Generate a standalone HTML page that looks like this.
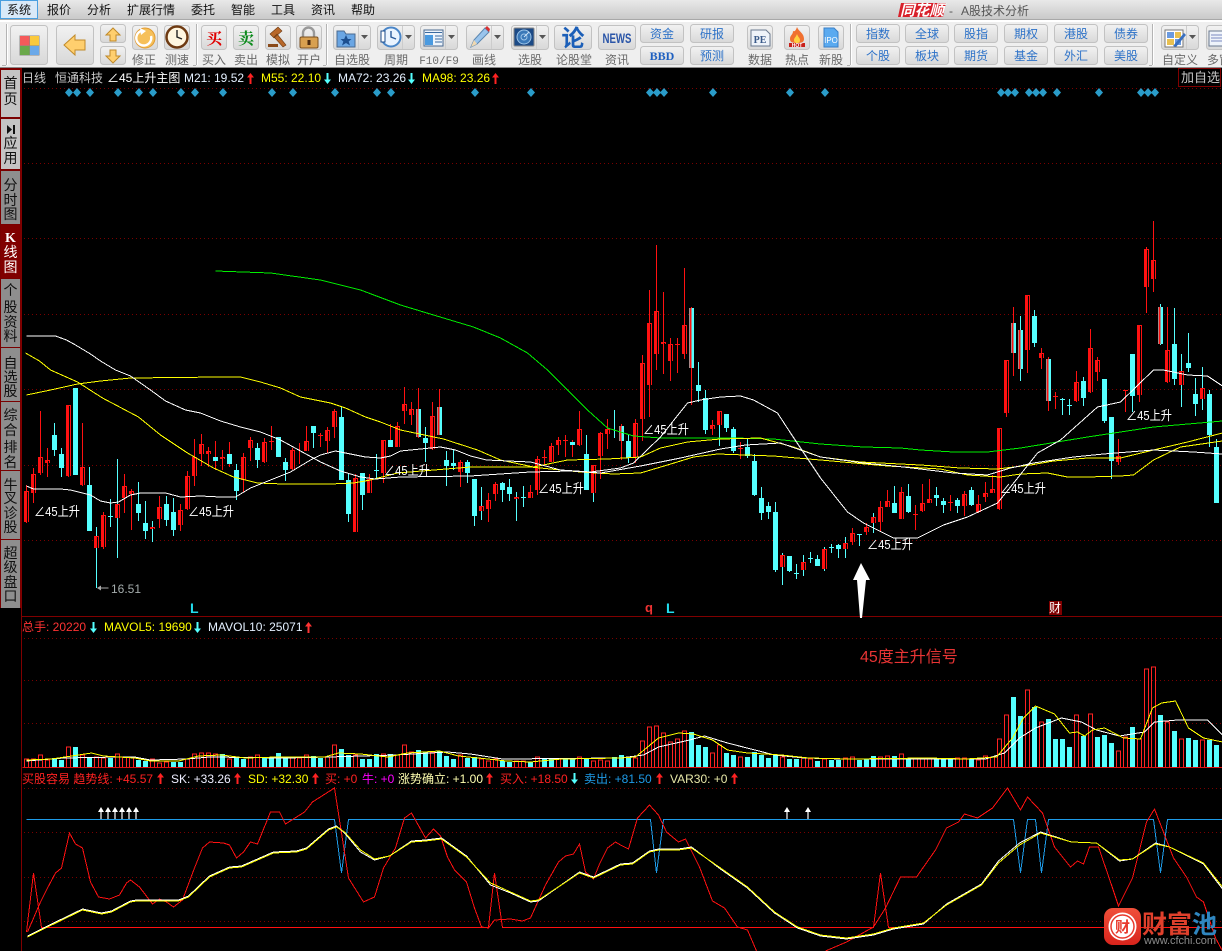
<!DOCTYPE html>
<html lang="zh-CN"><head><meta charset="utf-8"><title>同花顺 A股技术分析</title>
<style>
html,body{margin:0;padding:0;background:#000;width:1222px;height:951px;overflow:hidden}
svg{display:block;position:absolute;left:0;top:0}
text{font-family:"Liberation Sans","WenQuanYi Zen Hei","Noto Sans CJK SC",sans-serif;font-size:12px}
.l{fill:#6a6a6a;text-anchor:middle}
.g{fill:#2d72c8;text-anchor:middle}
.m{fill:#111}
.b{fill:url(#bg);stroke:#c2c2c2}
.s{font-size:14px;text-anchor:middle;fill:#111}
.a{font-size:13px}
path,polyline{shape-rendering:auto}
.c path,.c polyline{shape-rendering:crispEdges;fill:none}
</style></head><body>
<svg width="1222" height="951" viewBox="0 0 1222 951" xmlns="http://www.w3.org/2000/svg">
<defs>
<linearGradient id="mb" x1="0" y1="0" x2="0" y2="1"><stop offset="0" stop-color="#e9e9e9"/><stop offset="1" stop-color="#c9c9c9"/></linearGradient>
<linearGradient id="bg" x1="0" y1="0" x2="0" y2="1"><stop offset="0" stop-color="#f2f2f2"/><stop offset="1" stop-color="#d8d8d8"/></linearGradient>
<linearGradient id="wm" x1="0" y1="0" x2="0" y2="1"><stop offset="0" stop-color="#f0503a"/><stop offset="1" stop-color="#d8241c"/></linearGradient>
<path id="ua" d="M3.5 0L7 4.5H4.5V11H2.5V4.5H0z"/>
<path id="da" d="M3.5 11L7 6.5H4.5V0H2.5V6.5H0z"/>
<path id="sa" d="M3 0L6 5H3.6V12H2.4V5H0z"/>
</defs>
<rect width="1222" height="951" fill="#000"/>

<!-- menu -->
<rect width="1222" height="19" fill="url(#mb)"/>
<rect y="19" width="1222" height="1" fill="#a8a8a8"/><rect y="20" width="1222" height="2" fill="#fff"/>
<rect y="22" width="1222" height="45" fill="#efefef"/><rect y="67" width="1222" height="1" fill="#8a8a8a"/>
<rect x=".5" y=".5" width="37" height="18" fill="#d9e9f8" stroke="#4a9fe0"/>
<g class="m">
<text x="7" y="14">系统</text><text x="47" y="14">报价</text><text x="87" y="14">分析</text><text x="127" y="14">扩展行情</text><text x="191" y="14">委托</text><text x="231" y="14">智能</text><text x="271" y="14">工具</text><text x="311" y="14">资讯</text><text x="351" y="14">帮助</text>
</g>
<path d="M901 3H946L943 17H898z" fill="#d8202a"/>
<text x="900" y="15.500" textLength="44" lengthAdjust="spacingAndGlyphs" style="font-size:15px;font-weight:bold;font-style:italic" fill="#fff">同花顺</text>
<text x="949" y="15" fill="#555">-</text><text x="961" y="15" fill="#555">A股技术分析</text>

<!-- separators -->
<g fill="none">
<path d="M6.5 24V65M2 65.5H6M196.5 24V65M193 65.5H196M326.5 24V65M323 65.5H326M850.5 24V65M847 65.5H850M1152.5 24V65M1149 65.5H1152" stroke="#b4b4b4"/>
<path d="M7.5 24V65M197.5 24V65M327.5 24V65M851.5 24V65M1153.5 24V65" stroke="#fff"/>
</g>

<!-- buttons -->
<rect class="b" x="10.5" y="25.5" width="37" height="39" rx="3"/>
<rect x="19.5" y="35.5" width="20" height="20" fill="#888"/><rect x="20" y="36" width="9.5" height="9.5" fill="#f55a5a"/><rect x="30" y="36" width="9" height="9.5" fill="#fbc93c"/><rect x="20" y="46" width="9.5" height="9" fill="#6aa84a"/><rect x="30" y="46" width="9" height="9" fill="#6aa8e8"/>
<rect class="b" x="56.5" y="25.5" width="37" height="39" rx="3"/>
<path d="M64 45L75 35V40H85V50H75V55z" fill="#ffcf6e" stroke="#c08a2a"/>
<rect class="b" x="100.5" y="24.5" width="25" height="18" rx="3"/><path d="M113 28L120 35H116V41H110V35H106z" fill="#ffcf6e" stroke="#c08a2a"/>
<rect class="b" x="100.5" y="46.5" width="25" height="18" rx="3"/><path d="M113 63L120 56H116V50H110V56H106z" fill="#ffcf6e" stroke="#c08a2a"/>
<rect class="b" x="132.5" y="25.5" width="25" height="24" rx="3"/>
<circle cx="145" cy="38" r="10" fill="#f6c05a" stroke="#e09a30"/><path d="M141 31A7.5 7.5 0 1 0 151 36" fill="none" stroke="#fff" stroke-width="2.4"/><path d="M140 28L146 31L141 35z" fill="#fff"/>
<rect class="b" x="164.5" y="25.5" width="25" height="24" rx="3"/>
<circle cx="177" cy="37" r="10.5" fill="#fff6e0" stroke="#6e3a12" stroke-width="2.5"/><path d="M177 30V37L182 39" fill="none" stroke="#222" stroke-width="1.4"/>
<rect class="b" x="201.5" y="25.5" width="25" height="24" rx="3"/><text x="214" y="44" style="font-size:16px;font-family:'Liberation Serif','Noto Serif CJK SC',serif;font-weight:bold" fill="#e00000" text-anchor="middle">买</text>
<rect class="b" x="233.5" y="25.5" width="25" height="24" rx="3"/><text x="246" y="44" style="font-size:16px;font-family:'Liberation Serif','Noto Serif CJK SC',serif;font-weight:bold" fill="#0a8a1a" text-anchor="middle">卖</text>
<rect class="b" x="265.5" y="25.5" width="25" height="24" rx="3"/>
<path d="M270 34L278 27L282 31L274 38zM277 34L286 45L283 47L274 37z" fill="#b8682a" stroke="#6e3a12" stroke-width=".6"/><rect x="268" y="44" width="10" height="3" fill="#8a4a1a"/>
<rect class="b" x="296.5" y="25.5" width="25" height="24" rx="3"/>
<path d="M303 37V33A5.5 5.5 0 0 1 314 33V37" fill="none" stroke="#999" stroke-width="2.4"/><rect x="300" y="37" width="18" height="11" rx="1.5" fill="#d8a050" stroke="#7a5020"/><rect x="307.500" y="40" width="3" height="5" fill="#4a2a10"/>

<rect class="b" x="333.5" y="25.5" width="37" height="24" rx="3"/><path d="M358.500 26V49" stroke="#ccc"/><path d="M361 35H368L364.500 39z" fill="#555"/>
<path d="M337 31H344L346 34H355V47H337z" fill="#6aa6e4" stroke="#4a6a90"/><path d="M346 35L347.800 39H351.500L348.700 41.500L350 45.500L346 43L342 45.500L343.300 41.500L340.500 39H344.200z" fill="#1d4f8f"/>
<rect class="b" x="377.500" y="25.5" width="37" height="24" rx="3"/><path d="M402.500 26V49" stroke="#ccc"/><path d="M405 35H412L408.500 39z" fill="#555"/>
<circle cx="391" cy="37" r="9.500" fill="#eaf4ff" stroke="#4a86c8" stroke-width="2"/><path d="M391 31V37L396 39" fill="none" stroke="#2a5a9a" stroke-width="1.400"/><rect x="381" y="31" width="4" height="11" fill="#fff" stroke="#1a4a8a"/>
<rect class="b" x="420.500" y="25.5" width="37" height="24" rx="3"/><path d="M445.500 26V49" stroke="#ccc"/><path d="M448 35H455L451.500 39z" fill="#555"/>
<rect x="424" y="30" width="19" height="16" fill="#eef4fb" stroke="#4a6a90"/><rect x="425" y="35" width="8" height="10" fill="#4a9ae0"/><path d="M435 36H442M435 39H442M435 42H442M425 32.500H442" stroke="#3a6aa0" fill="none"/>
<rect class="b" x="466.500" y="25.5" width="37" height="24" rx="3"/><path d="M491.500 26V49" stroke="#ccc"/><path d="M494 35H501L497.500 39z" fill="#555"/>
<path d="M471 47L474 40L485 28L489 32L477 44z" fill="#9ac4ec" stroke="#5a86b0"/><path d="M485 28L487 26L490 29L489 32z" fill="#d83030"/><path d="M471 47L474 40L477 44z" fill="#f0d8b0"/>
<rect class="b" x="511.500" y="25.5" width="37" height="24" rx="3"/><path d="M536.500 26V49" stroke="#ccc"/><path d="M539 35H546L542.500 39z" fill="#555"/>
<rect x="514" y="28" width="20" height="18" rx="1" fill="#1c4a86" stroke="#888"/><circle cx="524" cy="37" r="7" fill="#3a78b8" stroke="#9cc4e8"/><circle cx="524" cy="37" r="3" fill="none" stroke="#9cc4e8"/><path d="M524 37L529 32" stroke="#cfe4f6"/>
<rect class="b" x="554.500" y="25.5" width="37" height="24" rx="3"/><text x="573" y="46" text-anchor="middle" style="font-size:23px;font-weight:bold" fill="#1c5fb8">论</text>
<rect class="b" x="598.500" y="25.5" width="37" height="24" rx="3"/><text x="617" y="43" text-anchor="middle" textLength="29" lengthAdjust="spacingAndGlyphs" style="font-size:14px;font-weight:bold" fill="#2a55a8">NEWS</text>

<rect class="b" x="640.500" y="24.500" width="43" height="18" rx="3"/><text class="g" x="662" y="38">资金</text>
<rect class="b" x="640.500" y="46.500" width="43" height="18" rx="3"/><text x="662" y="60" text-anchor="middle" style="font-family:'Liberation Serif',serif;font-weight:bold;font-size:12px" fill="#1d5fc0">BBD</text>
<rect class="b" x="690.500" y="24.500" width="43" height="18" rx="3"/><text class="g" x="712" y="38">研报</text>
<rect class="b" x="690.500" y="46.500" width="43" height="18" rx="3"/><text class="g" x="712" y="60">预测</text>

<rect class="b" x="747.500" y="25.5" width="25" height="24" rx="3"/><path d="M751 30H766L770 34V46H751z" fill="#eef3fa" stroke="#6a7a90"/><text x="760" y="43" text-anchor="middle" style="font-family:'Liberation Serif',serif;font-weight:bold;font-size:10px" fill="#3a5a8a">PE</text>
<rect class="b" x="784.500" y="25.5" width="25" height="24" rx="3"/><path d="M797 27C799 32 804 33 804 39C804 42 802 43 797 43C792 43 790 42 790 39C790 35 793 35 793 31C795 32 796 30 797 27z" fill="#f07030"/><path d="M797 34C798 37 800 38 800 40C800 42 799 43 797 43C795 43 794 42 794 40C794 38 796 37 797 34z" fill="#ffd040"/><rect x="789" y="43" width="16" height="4" fill="#c8201a"/><text x="797" y="47" text-anchor="middle" style="font-size:5px;font-weight:bold" fill="#fff">HOT</text>
<rect class="b" x="818.500" y="25.5" width="25" height="24" rx="3"/><path d="M824 28H834L838 32V47H824z" fill="#5aaaf0" stroke="#3a80c8"/><text x="831" y="43" text-anchor="middle" style="font-size:8px" fill="#fff">IPO</text>

<g>
<rect class="b" x="856.500" y="24.500" width="43" height="18" rx="3"/><text class="g" x="878" y="38">指数</text>
<rect class="b" x="905.500" y="24.500" width="43" height="18" rx="3"/><text class="g" x="927" y="38">全球</text>
<rect class="b" x="954.500" y="24.500" width="43" height="18" rx="3"/><text class="g" x="976" y="38">股指</text>
<rect class="b" x="1004.500" y="24.500" width="43" height="18" rx="3"/><text class="g" x="1026" y="38">期权</text>
<rect class="b" x="1054.500" y="24.500" width="43" height="18" rx="3"/><text class="g" x="1076" y="38">港股</text>
<rect class="b" x="1104.500" y="24.500" width="43" height="18" rx="3"/><text class="g" x="1126" y="38">债券</text>
<rect class="b" x="856.500" y="46.500" width="43" height="18" rx="3"/><text class="g" x="878" y="60">个股</text>
<rect class="b" x="905.500" y="46.500" width="43" height="18" rx="3"/><text class="g" x="927" y="60">板块</text>
<rect class="b" x="954.500" y="46.500" width="43" height="18" rx="3"/><text class="g" x="976" y="60">期货</text>
<rect class="b" x="1004.500" y="46.500" width="43" height="18" rx="3"/><text class="g" x="1026" y="60">基金</text>
<rect class="b" x="1054.500" y="46.500" width="43" height="18" rx="3"/><text class="g" x="1076" y="60">外汇</text>
<rect class="b" x="1104.500" y="46.500" width="43" height="18" rx="3"/><text class="g" x="1126" y="60">美股</text>
</g>
<rect class="b" x="1161.500" y="25.5" width="37" height="24" rx="3"/><path d="M1186.500 26V49" stroke="#ccc"/><path d="M1189 35H1196L1192.500 39z" fill="#555"/>
<rect x="1165" y="30" width="18" height="17" fill="#fff" stroke="#777"/><rect x="1167" y="32" width="7" height="6" fill="#6a9ae0"/><rect x="1175" y="32" width="6" height="6" fill="#e8c050"/><rect x="1167" y="39" width="7" height="6" fill="#e8c050"/><rect x="1175" y="39" width="6" height="6" fill="#6a9ae0"/><path d="M1173 46L1184 33L1186 35L1176 47z" fill="#3a70c0"/>
<rect class="b" x="1206.500" y="25.500" width="24" height="24" rx="3"/><rect x="1209" y="31" width="14" height="15" fill="#eef3fa" stroke="#6a7a90"/><path d="M1211 35H1222M1211 38H1222M1211 41H1222" stroke="#7a8ac0"/>

<g class="l">
<text x="144" y="64">修正</text><text x="177" y="64">测速</text><text x="214" y="64">买入</text><text x="246" y="64">卖出</text><text x="278" y="64">模拟</text><text x="309" y="64">开户</text><text x="352" y="64">自选股</text><text x="396" y="64">周期</text>
<text x="439" y="64" style="font-family:'Liberation Mono',monospace;font-size:11px">F10/F9</text>
<text x="484" y="64">画线</text><text x="530" y="64">选股</text><text x="574" y="64">论股堂</text><text x="617" y="64">资讯</text><text x="760" y="64">数据</text><text x="797" y="64">热点</text><text x="831" y="64">新股</text><text x="1180" y="64">自定义</text><text x="1219" y="64">多窗</text>
</g>

<!-- sidebar -->
<rect x="0" y="68" width="21" height="883" fill="#000"/>
<rect x="0" y="68" width="21" height="540" fill="#7a0000"/>
<rect x="1" y="70" width="19" height="47" fill="#c4c4c4"/>
<rect x="1" y="119" width="19" height="50" fill="#c4c4c4"/>
<rect x="1" y="171" width="19" height="53" fill="#8e8e8e"/>
<rect x="1" y="225" width="19" height="53" fill="#800000"/>
<rect x="1" y="279" width="19" height="68" fill="#8e8e8e"/>
<rect x="1" y="348" width="19" height="53" fill="#8e8e8e"/>
<rect x="1" y="402" width="19" height="68" fill="#8e8e8e"/>
<rect x="1" y="471" width="19" height="68" fill="#8e8e8e"/>
<rect x="1" y="540" width="19" height="68" fill="#8e8e8e"/>
<rect x="0" y="608" width="21" height="343" fill="#000"/>
<g class="s">
<text class="s" x="10.500" y="88">首</text><text class="s" x="10.500" y="104">页</text>
<path d="M7 125V134L12 129.500zM13 125H15V134H13z" fill="#111"/>
<text class="s" x="10.500" y="148">应</text><text class="s" x="10.500" y="163">用</text>
<text class="s" x="10.500" y="190">分</text><text class="s" x="10.500" y="205">时</text><text class="s" x="10.500" y="219">图</text>
<text class="s" x="10.500" y="242" style="font-family:'Liberation Serif',serif;font-weight:bold;fill:#fff">K</text><text class="s" x="10.500" y="257" style="fill:#fff">线</text><text class="s" x="10.500" y="272" style="fill:#fff">图</text>
<text class="s" x="10.500" y="295">个</text><text class="s" x="10.500" y="312">股</text><text class="s" x="10.500" y="327">资</text><text class="s" x="10.500" y="341">料</text>
<text class="s" x="10.500" y="368">自</text><text class="s" x="10.500" y="382">选</text><text class="s" x="10.500" y="396">股</text>
<text class="s" x="10.500" y="420">综</text><text class="s" x="10.500" y="435">合</text><text class="s" x="10.500" y="452">排</text><text class="s" x="10.500" y="467">名</text>
<text class="s" x="10.500" y="490">牛</text><text class="s" x="10.500" y="503">叉</text><text class="s" x="10.500" y="518">诊</text><text class="s" x="10.500" y="532">股</text>
<text class="s" x="10.500" y="558">超</text><text class="s" x="10.500" y="572">级</text><text class="s" x="10.500" y="587">盘</text><text class="s" x="10.500" y="601">口</text>
</g>

<!-- grid -->
<g class="c">
<path stroke="#7a0000" stroke-dasharray="1 3" d="M24 88.500H1222M24 163.500H1222M24 238.500H1222M24 314.500H1222M24 389.500H1222M24 465.500H1222M24 540.500H1222M24 638.500H1222M24 680.500H1222M24 723.500H1222M24 788.500H1222M24 832.500H1222M24 877.500H1222M24 921.500H1222"/>
<path stroke="#800000" d="M21.500 68V951M21 616.500H1222"/>
</g>

<!-- header rows -->
<text x="22" y="82" fill="#c8c8c8">日线</text><text x="55" y="82" fill="#c8c8c8">恒通科技</text><text x="107" y="82" fill="#fff">∠45上升主图</text>
<text x="184" y="82" fill="#e4f0ff">M21: 19.52</text><use href="#ua" x="247" y="73" fill="#f22"/>
<text x="261" y="82" fill="#ff0">M55: 22.10</text><use href="#da" x="324" y="73" fill="#5ff"/>
<text x="338" y="82" fill="#e4f0ff">MA72: 23.26</text><use href="#da" x="408" y="73" fill="#5ff"/>
<text x="422" y="82" fill="#ff0">MA98: 23.26</text><use href="#ua" x="492" y="73" fill="#f22"/>
<rect x="1178.500" y="68.500" width="42" height="18" fill="#000" stroke="#800000"/><text x="1181" y="82" fill="#c8c8c8" style="font-size:13px">加自选</text>

<!-- diamonds -->
<path fill="#2a9cc9" d="M69 88l4 4.500-4 4.500-4-4.500zM77 88l4 4.500-4 4.500-4-4.500zM90 88l4 4.500-4 4.500-4-4.500zM118 88l4 4.500-4 4.500-4-4.500zM139 88l4 4.500-4 4.500-4-4.500zM153 88l4 4.500-4 4.500-4-4.500zM181 88l4 4.500-4 4.500-4-4.500zM195 88l4 4.500-4 4.500-4-4.500zM223 88l4 4.500-4 4.500-4-4.500zM272 88l4 4.500-4 4.500-4-4.500zM293 88l4 4.500-4 4.500-4-4.500zM335 88l4 4.500-4 4.500-4-4.500zM377 88l4 4.500-4 4.500-4-4.500zM391 88l4 4.500-4 4.500-4-4.500zM475 88l4 4.500-4 4.500-4-4.500zM531 88l4 4.500-4 4.500-4-4.500zM650 88l4 4.500-4 4.500-4-4.500zM657 88l4 4.500-4 4.500-4-4.500zM664 88l4 4.500-4 4.500-4-4.500zM713 88l4 4.500-4 4.500-4-4.500zM790 88l4 4.500-4 4.500-4-4.500zM825 88l4 4.500-4 4.500-4-4.500zM1001 88l4 4.500-4 4.500-4-4.500zM1008 88l4 4.500-4 4.500-4-4.500zM1015 88l4 4.500-4 4.500-4-4.500zM1029 88l4 4.500-4 4.500-4-4.500zM1036 88l4 4.500-4 4.500-4-4.500zM1043 88l4 4.500-4 4.500-4-4.500zM1057 88l4 4.500-4 4.500-4-4.500zM1099 88l4 4.500-4 4.500-4-4.500zM1141 88l4 4.500-4 4.500-4-4.500zM1148 88l4 4.500-4 4.500-4-4.500zM1155 88l4 4.500-4 4.500-4-4.500z"/>

<!-- candles -->
<g class="c" transform="translate(.5 0)">
<path stroke="#f11" d="M26 485V523M33 468V503M40 411V475M47 448V477M68 405V477M82 423V486M103 512V549M124 474V513M131 489V530M159 496V528M180 504V531M187 471V510M194 439V486M201 434V466M208 447V467M215 441V470M222 450V470M229 442V467M243 453V492M250 437V461M264 438V463M271 426V450M292 448V470M299 443V464M306 426V451M320 433V447M327 427V453M334 409V438M355 474V532M369 474V493M383 440V483M397 422V447M390 424V447M404 387V424M411 402V425M418 388V438M432 402V450M439 389V435M460 460V487M488 493V522M495 482V501M530 485V498M537 456V495M544 450V465M551 443V462M558 437V455M565 435V457M572 440V457M579 411V446M600 432V479M607 419V449M621 424V460M635 419V463M642 355V441M649 290V417M656 245V370M663 292V374M670 338V381M677 338V373M684 268V359M691 307V405M712 420V435M740 442V459M852 528V545M866 523V535M880 501V531M887 490V507M901 487V519M915 505V530M922 484V512M929 479V503M950 495V511M964 491V516M978 495V513M985 482V502M992 475V493M999 428V510M1006 360V417M1013 307V376M1027 295V373M1041 348V369M1048 357V411M1055 392V409M1076 371V402M1090 329V393M1097 357V381M1118 439V465M1125 390V412M1139 325V402M1146 247V313M1153 221V292M1167 307V383"/>
<path stroke="#5ff" d="M54 423V456M61 448V477M75 388V475M89 467V531M96 527V588M110 499V527M117 459V558M138 482V521M145 501V539M152 521V542M166 496V526M173 498V536M236 464V500M257 443V468M278 437V457M285 458V481M313 426V448M341 406V480M348 474V522M362 473V510M376 454V478M425 427V462M446 451V486M453 449V470M467 460V483M474 479V526M481 487V520M502 482V502M509 479V501M516 492V521M523 486V507M586 435V490M593 465V502M614 410V438M628 434V463M698 362V402M705 390V434M719 411V446M726 414V432M733 427V453M747 439V458M754 454V496M761 487V520M768 502V519M775 502V572M782 553V585M789 556V572M796 564V579M803 555V576M810 552V563M817 555V566M824 547V571M831 544V553M838 544V558M845 537V558M859 534V546M873 513V533M894 486V513M908 484V513M936 487V506M943 498V513M957 498V513M971 487V506M1020 316V381M1034 310V347M1062 398V415M1069 399V415M1083 377V406M1104 379V423M1111 417V479M1132 354V412M1160 304V345M1174 308V385M1181 354V407M1188 333V372M1195 378V416M1202 367V410M1209 390V447M1216 439V503"/>
<g stroke="#f11" stroke-width="5"><path id="rb" d="M26 491V522M33 474V493M40 457V473M47 460V463M68 405V476M82 467V485M96 536V548M103 515V547M117 504V518M124 486V498M131 491V494M152 527V529M159 507V519M180 510V525M187 476V509M194 457V476M201 444V454M208 451V454M222 457V459M243 457V480M250 440V448M264 442V462M292 450V469M306 441V451M327 430V441M334 411V427M355 478V532M369 479V493M383 440V473M397 426V447M404 404V411M411 409V415M432 416V449M460 462V472M481 506V511M488 500V509M495 484V494M516 497V499M530 492V498M537 459V490M551 446V462M558 440V445M579 429V445M593 465V493M600 433V456M607 429V434M635 423V457M642 363V419M649 323V385M656 311V354M663 342V344M670 344V361M684 325V354M712 425V429M719 411V425M782 555V567M803 562V570M824 549V569M845 543V549M852 533V542M866 527V532M873 517V523M880 507V522M887 501V507M901 492V519M922 503V511M929 499V503M964 494V506M978 504V512M985 493V497M992 489V493M999 428V509M1006 360V413M1027 295V350M1041 353V358M1076 382V401M1090 348V392M1097 360V372M1118 456V462M1139 325V395M1146 249V287M1153 260V279M1167 350V382M1181 371V385M1202 388V399"/></g>
<use href="#rb" x="1" y="1" stroke="#000" stroke-width="1"/>
<path stroke="#f11" stroke-width="5" d="M271 441v1M320 435v1M544 457v1M565 440v1M677 344v1M740 448v1M915 514v1M950 502v1M1055 396v1M1125 390v1"/>
<path stroke="#5ff" stroke-width="5" d="M54 435V450M61 454V468M75 388V475M89 485V531M138 504V513M145 523V531M166 504V520M173 512V530M215 457V461M229 454V464M236 470V491M257 448V460M278 437V457M285 462V470M313 426V433M341 417V480M348 480V514M362 473V495M390 440V447M418 409V437M425 438V443M439 407V435M446 460V466M453 463V466M467 462V473M474 479V516M502 483V490M509 487V494M572 442V445M586 454V490M621 426V441M628 441V458M691 308V368M698 385V391M705 398V430M726 414V428M733 429V451M747 447V456M754 461V495M761 498V513M768 506V512M775 512V570M789 556V571M817 559V566M838 545V549M894 503V513M908 496V512M936 495V498M943 501V505M957 500V506M971 490V505M1013 323V353M1020 330V369M1034 316V343M1048 359V401M1083 381V398M1104 379V421M1111 417V461M1132 354V396M1160 307V344M1174 344V379M1188 363V368M1195 394V404M1209 394V435M1216 447V503M110 516v1M376 470v1M523 497v1M796 573v1M810 558v1M831 547v1M859 534v1M1062 399v1M1069 405v1"/>
<path stroke="#f11" stroke-width="2" d="M417 409V437M438 407V435M620 426V441M690 308V368M1012 323V353M1019 330V369M1047 359V401M1159 307V344"/>

<!-- MA lines -->
<polyline stroke="#0e0" points="215,271 270,273 320,280 360,290 400,305 433,315 473,327 500,338 527,353 547,370 567,390 587,410 607,428 633,436 660,438 733,438 773,439 820,444 863,447 900,448 920,450 953,452 987,452 1020,448 1087,437 1153,427 1222,421"/>
<polyline stroke="#ff0" points="25,353 39,361 50,370 77,382 102,398 138,417 160,435 187,453 213,468 233,477 257,483 283,484 330,484 353,483 370,480 397,473 470,467 530,467 580,472 613,474 640,473 667,465 693,457 717,454 773,456 820,460 887,466 940,469 967,475 1000,477 1020,474 1047,473 1067,477 1087,477 1120,476 1133,475 1153,460 1180,447 1222,441"/>
<polyline stroke="#ff0" points="26,395 50,390 77,384 100,381 130,378 220,377 240,377 260,382 280,388 300,397 330,403 345,408 365,417 380,422 400,430 443,439 477,450 500,460 533,467 567,460 607,459 640,457 660,448 687,442 720,439 760,438 793,447 820,457 860,462 920,465 960,468 997,469 1030,465 1053,461 1087,458 1120,458 1153,450 1187,442 1222,433"/>
<polyline stroke="#fff" points="26,336 55,336 66,340 75,345 90,354 100,361 115,370 130,376 150,390 165,401 185,410 200,413 220,421 240,427 260,432 280,440 300,451 320,462 340,471 360,477 375,479 400,477 470,476 530,472 570,471 600,473 640,466 680,458 720,449 745,445 780,443 820,457 863,463 903,467 953,473 987,475 1010,468 1033,463 1073,457 1103,454 1153,450 1193,452 1222,454"/>
<polyline stroke="#fff" points="26,486 33,489 60,489 70,490 90,495 100,501 110,503 118,502 130,495 140,493 165,493 180,497 200,496 220,497 235,497 250,488 270,480 290,472 310,460 320,455 335,451 350,454 365,457 380,458 390,456 400,451 410,450 440,447 455,450 470,456 486,460 530,462 560,470 590,472 620,468 633,463 660,437 687,403 700,400 720,397 740,396 753,400 777,413 790,433 820,478 847,512 863,523 893,538 917,538 943,525 967,517 997,503 1010,487 1037,453 1060,440 1097,407 1120,402 1153,370 1163,370 1187,375 1207,376 1222,386"/>
<path stroke="#aaa" d="M97 588H108"/>
</g>
<path d="M97 588l4-2.500v5z" fill="#aaa"/>
<text x="111" y="593" fill="#a4acac">16.51</text>

<g fill="#fff">
<text class="a" x="34" y="516" textLength="46" lengthAdjust="spacingAndGlyphs">∠45上升</text><text class="a" x="188" y="516" textLength="46" lengthAdjust="spacingAndGlyphs">∠45上升</text><text class="a" x="384" y="475" textLength="46" lengthAdjust="spacingAndGlyphs">∠45上升</text><text class="a" x="538" y="493" textLength="46" lengthAdjust="spacingAndGlyphs">∠45上升</text><text class="a" x="643" y="434" textLength="46" lengthAdjust="spacingAndGlyphs">∠45上升</text><text class="a" x="867" y="549" textLength="46" lengthAdjust="spacingAndGlyphs">∠45上升</text><text class="a" x="1000" y="493" textLength="46" lengthAdjust="spacingAndGlyphs">∠45上升</text><text class="a" x="1126" y="420" textLength="46" lengthAdjust="spacingAndGlyphs">∠45上升</text>
</g>
<path d="M861 563L870 580H866L862 618H860L857 580H853z" fill="#fff"/>
<text x="190" y="613" style="font-size:14px;font-weight:bold" fill="#2de">L</text><text x="666" y="613" style="font-size:14px;font-weight:bold" fill="#2de">L</text><text x="645" y="612" style="font-size:13px;font-weight:bold" fill="#e33">q</text>
<rect x="1049" y="601" width="13" height="14" fill="#800000"/><text x="1049" y="612" fill="#fff">财</text>

<!-- volume pane -->
<text x="22" y="631" fill="#f33">总手: 20220</text><use href="#da" x="90" y="622" fill="#5ff"/>
<text x="104" y="631" fill="#ff0">MAVOL5: 19690</text><use href="#da" x="194" y="622" fill="#5ff"/>
<text x="208" y="631" fill="#e4f0ff">MAVOL10: 25071</text><use href="#ua" x="305" y="622" fill="#f33"/>
<text x="860" y="662" style="font-size:16px" fill="#e83434">45度主升信号</text>

<g class="c" transform="translate(.5 0)">
<path stroke="#f22" d="M24 767v-8h4v8M31 767v-8h4v8M38 767v-12h4v12M45 767v-7h4v7M66 767v-20h4v20M80 767v-12h4v12M94 767v-10h4v10M101 767v-9h4v9M115 767v-13h4v13M122 767v-10h4v10M129 767v-10h4v10M150 767v-8h4v8M157 767v-4h4v4M164 767v-5h4v5M185 767v-8h4v8M192 767v-13h4v13M199 767v-14h4v14M206 767v-14h4v14M213 767v-13h4v13M227 767v-8h4v8M248 767v-10h4v10M255 767v-12h4v12M290 767v-9h4v9M297 767v-9h4v9M304 767v-12h4v12M325 767v-10h4v10M332 767v-22h4v22M353 767v-12h4v12M381 767v-13h4v13M395 767v-12h4v12M402 767v-22h4v22M409 767v-15h4v15M430 767v-15h4v15M458 767v-12h4v12M479 767v-8h4v8M486 767v-6h4v6M493 767v-8h4v8M514 767v-6h4v6M521 767v-6h4v6M535 767v-10h4v10M556 767v-8h4v8M577 767v-10h4v10M591 767v-6h4v6M598 767v-7h4v7M605 767v-6h4v6M633 767v-9h4v9M640 767v-26h4v26M647 767v-40h4v40M654 767v-41h4v41M661 767v-34h4v34M668 767v-25h4v25M675 767v-28h4v28M682 767v-36h4v36M710 767v-14h4v14M717 767v-22h4v22M738 767v-10h4v10M780 767v-10h4v10M801 767v-9h4v9M808 767v-8h4v8M822 767v-8h4v8M843 767v-9h4v9M850 767v-10h4v10M878 767v-10h4v10M885 767v-11h4v11M899 767v-13h4v13M913 767v-9h4v9M920 767v-8h4v8M927 767v-8h4v8M955 767v-9h4v9M962 767v-9h4v9M976 767v-7h4v7M983 767v-11h4v11M990 767v-10h4v10M997 767v-28h4v28M1004 767v-52h4v52M1025 767v-77h4v77M1039 767v-45h4v45M1074 767v-52h4v52M1088 767v-53h4v53M1116 767v-16h4v16M1123 767v-30h4v30M1137 767v-28h4v28M1144 767v-98h4v98M1151 767v-100h4v100M1165 767v-45h4v45M1179 767v-28h4v28M1200 767v-27h4v27"/>
<path stroke="#5ff" stroke-width="5" d="M54 767v-9M61 767v-7M75 767v-20M89 767v-10M110 767v-9M138 767v-7M145 767v-6M173 767v-5M180 767v-5M222 767v-13M236 767v-10M243 767v-8M264 767v-9M271 767v-9M278 767v-14M285 767v-9M313 767v-11M320 767v-9M341 767v-18M348 767v-12M362 767v-8M369 767v-8M376 767v-13M390 767v-13M418 767v-17M425 767v-15M439 767v-16M446 767v-11M453 767v-8M467 767v-9M474 767v-10M502 767v-6M509 767v-5M530 767v-5M544 767v-8M551 767v-8M565 767v-8M572 767v-8M586 767v-8M614 767v-10M621 767v-12M628 767v-9M691 767v-35M698 767v-22M705 767v-20M726 767v-14M733 767v-12M747 767v-10M754 767v-15M761 767v-12M768 767v-9M775 767v-12M789 767v-8M796 767v-8M817 767v-6M831 767v-7M838 767v-7M859 767v-7M866 767v-8M873 767v-11M894 767v-11M908 767v-9M936 767v-9M943 767v-8M950 767v-8M971 767v-8M1013 767v-70M1020 767v-51M1034 767v-60M1048 767v-48M1055 767v-28M1062 767v-28M1069 767v-20M1083 767v-31M1097 767v-30M1104 767v-32M1111 767v-24M1132 767v-40M1160 767v-52M1174 767v-36M1188 767v-29M1195 767v-27M1209 767v-27M1216 767v-22"/>
<polyline stroke="#fff" points="26,761 63,758 119,757 134,757 150,760 186,759 209,757 285,758 328,757 395,755 447,752 470,754 502,759 620,758 643,755 658,747 689,740 704,736 727,743 774,755 804,758 843,759 985,759 1004,753 1019,738 1035,728 1061,718 1081,722 1096,730 1119,736 1144,732 1154,722 1177,720 1207,720 1222,735"/>
<polyline stroke="#ff0" points="26,760 51,759 71,756 91,753 103,756 134,758 150,761 178,761 198,756 221,755 245,758 277,757 324,757 338,753 360,754 387,757 407,753 439,751 458,756 478,758 506,761 530,762 561,759 620,758 635,757 658,738 678,733 693,734 712,740 727,750 747,753 781,755 808,758 850,759 927,758 965,759 996,757 1012,738 1023,718 1035,706 1054,714 1069,733 1077,732 1084,736 1092,730 1104,728 1123,738 1140,739 1152,708 1161,703 1175,701 1188,728 1203,738 1222,742"/>
<path stroke="#e01010" d="M22 767.500H1222"/>

<!-- sub pane -->
<path stroke="#1e9be8" d="M26 819.500H334L341 873L348 819.500H650L656 873L663 819.500H1013L1020 873L1027 819.500H1035L1041 873L1048 819.500H1153L1160 873L1167 819.500H1222"/>
<path stroke="#f11" d="M26 932L33 873L41 927.500H488L494 873L502 927.500H873L880 873L888 927.500H1222"/>
<path stroke="#f11" d="M27 932L40 902L47 888L55 873L61 868L69 833L75 844L82 848L90 882L98 897L109 899L119 895L126 883L130 880L139 887L152 904L159 899L166 902L173 907L182 900L194 868L202 848L209 842L223 843L229 845L236 858L243 852L250 842L257 844L270 812L279 812L285 824L304 812L312 802L334 788L348 878L363 902L374 897L383 868L395 848L404 818L411 813L425 838L433 829L440 836L447 857L454 870L466 882L474 908L481 927L488 928L494 920L510 919L522 921L530 918L545 885L558 862L565 856L573 854L579 844L585 872L593 879L599 864L607 848L615 842L620 845L628 849L637 818L649 805L658 815L666 832L678 842L685 839L699 867L712 901L724 908L737 927L747 930L756 951M825 951L846 942L873 927L885 908L900 877L916 877L935 850L946 828L958 822L964 814L977 818L992 808L1007 788L1020 810L1027 797L1042 813L1054 847L1070 867L1077 861L1083 864L1089 847L1098 847L1111 885L1118 906L1132 878L1146 822L1154 809L1173 858L1186 877L1196 897L1203 902L1215 938L1222 951"/>
<polyline stroke="#fff" points="27,936 47,926 82,909 101,913 111,911 130,901 136,900 178,900 188,896 209,876 229,867 241,866 273,852 296,851 306,848 328,829 336,826 344,833 360,852 374,860 389,856 411,841 425,840 441,838 466,856 490,885 510,893 530,902 538,901 579,872 593,877 620,864 632,863 649,851 658,849 678,849 691,847 720,869 747,888 774,913 797,928 820,936 846,939 873,935 893,929 923,924 946,904 981,884 998,861 1019,843 1040,832 1071,842 1096,843 1119,861 1132,859 1155,843 1169,847 1203,864 1222,889"/>
<polyline stroke="#ff0" points="27,937 47,927 82,910 101,914 111,912 130,902 136,901 178,901 188,897 209,877 229,868 241,867 273,853 296,852 306,849 328,830 336,827 344,832 360,850 374,859 389,856 411,842 425,841 441,839 466,857 490,883 510,892 530,901 538,900 579,873 593,878 620,865 632,864 649,852 658,850 678,850 691,848 720,868 747,887 774,912 797,927 820,935 846,938 873,934 893,928 923,923 946,905 981,885 998,863 1019,845 1040,833 1071,842 1096,843 1119,860 1132,859 1155,844 1169,847 1203,863 1222,887"/>
</g>
<g fill="#fff"><use href="#sa" x="98" y="807"/><use href="#sa" x="105" y="807"/><use href="#sa" x="112" y="807"/><use href="#sa" x="119" y="807"/><use href="#sa" x="126" y="807"/><use href="#sa" x="133" y="807"/><use href="#sa" x="784" y="807"/><use href="#sa" x="805" y="807"/></g>

<text x="22" y="783" fill="#f22">买股容易 趋势线: +45.57</text><use href="#ua" x="157" y="773" fill="#f22"/>
<text x="171" y="783" fill="#eef">SK: +33.26</text><use href="#ua" x="234" y="773" fill="#f22"/>
<text x="248" y="783" fill="#ff0">SD: +32.30</text><use href="#ua" x="312" y="773" fill="#f22"/>
<text x="325" y="783" fill="#f22">买: +0</text><text x="362" y="783" fill="#f0f">牛: +0</text>
<text x="398" y="783" fill="#ffffb0">涨势确立: +1.00</text><use href="#ua" x="486" y="773" fill="#f22"/>
<text x="500" y="783" fill="#f22">买入: +18.50</text><use href="#da" x="571" y="773" fill="#5ff"/>
<text x="584" y="783" fill="#1e9be8">卖出: +81.50</text><use href="#ua" x="656" y="773" fill="#f22"/>
<text x="670" y="783" fill="#e8e8a8">VAR30: +0</text><use href="#ua" x="731" y="773" fill="#f22"/>

<!-- watermark -->
<rect x="1104" y="908" width="37" height="37" rx="9" fill="url(#wm)"/>
<circle cx="1122.500" cy="926.500" r="14" fill="#fff"/><circle cx="1122.500" cy="926.500" r="11.500" fill="none" stroke="#e8392c" stroke-width="1.500"/>
<text x="1122.500" y="932" text-anchor="middle" style="font-size:15px;font-weight:bold" fill="#e8392c">财</text>
<text x="1142" y="933" style="font-size:25px;font-weight:bold;font-family:'Liberation Sans','Noto Sans CJK SC',sans-serif" fill="#e0402c">财富<tspan fill="#2f86c0">池</tspan></text>
<text x="1144" y="944" textLength="72" style="font-size:11px" fill="#8a8a8a">www.cfchi.com</text>
</svg>
</body></html>
